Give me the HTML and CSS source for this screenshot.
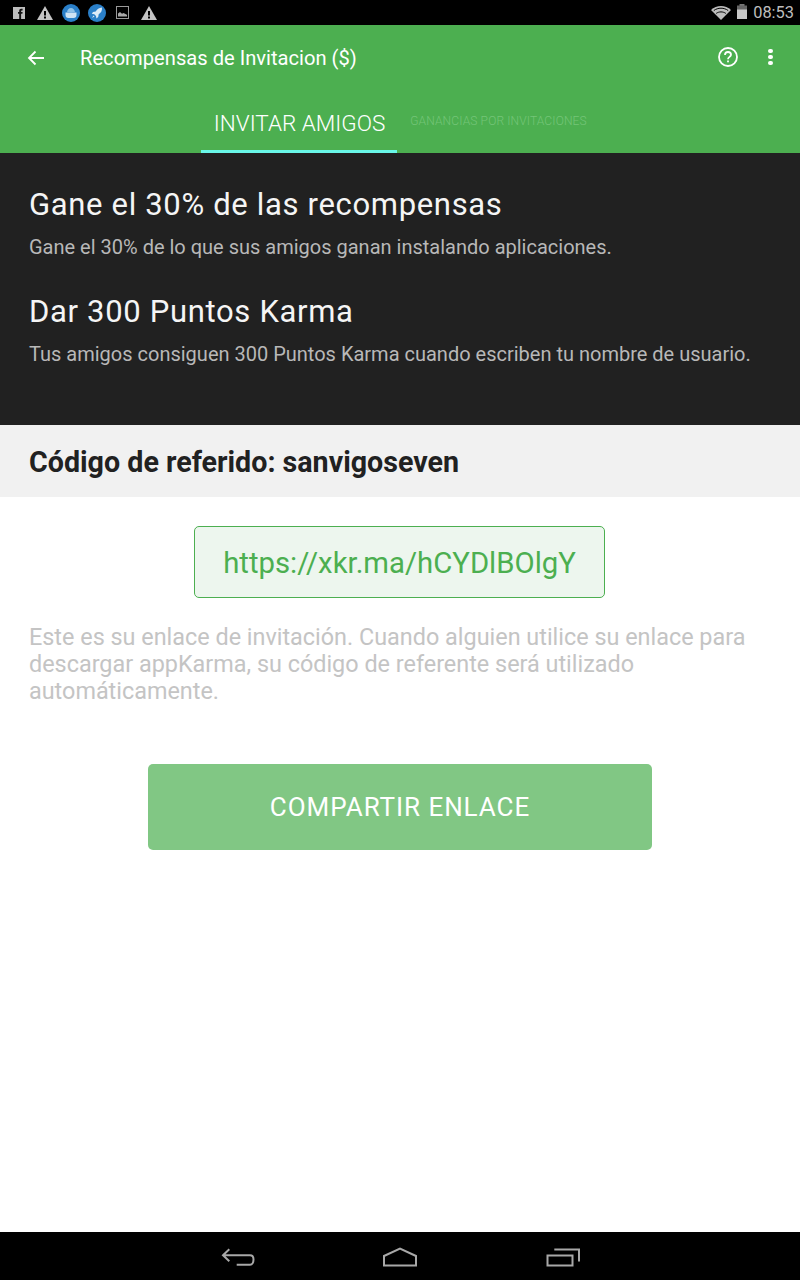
FILE: index.html
```html
<!DOCTYPE html>
<html lang="es">
<head>
<meta charset="utf-8">
<title>Recompensas de Invitacion</title>
<link rel="stylesheet" href="styles.css">
</head>
<body>
<div class="screen">
  <div class="statusbar">
    <div class="status-left">
      <svg class="si" width="12" height="12" viewBox="0 0 12 12"><rect width="12" height="12" fill="#bdbdbd"/><path d="M6.200 12V6.800H5V5h1.200V3.800C6.200 2.400 7 1.700 8.200 1.700h1.400v1.800H8.800c-.5 0-.7.200-.7.700V5h1.500l-.2 1.800H8.100V12z" fill="#111"/></svg>
      <svg class="si w1" width="16" height="14" viewBox="0 0 16 14"><path d="M8 0l8 14H0z" fill="#c4c4c4"/><rect x="7" y="5" width="2" height="4.500" fill="#000"/><rect x="7" y="10.500" width="2" height="2" fill="#000"/></svg>
      <svg class="si c1" width="18" height="18" viewBox="0 0 18 18"><circle cx="9" cy="9" r="9" fill="#2a7fc8"/><path d="M3.500 8.500h11V11a3 3 0 0 1-3 3h-5a3 3 0 0 1-3-3z" fill="#cfe4f4"/><path d="M5 8.500C5.200 5.500 7 4 9 4s3.800 1.500 4 4.500c-1.500-1-2.500 0-4 0s-2.500-1-4 0z" fill="#8fc2e8"/></svg>
      <svg class="si c2" width="18" height="18" viewBox="0 0 18 18"><circle cx="9" cy="9" r="9" fill="#2a7fc8"/><path d="M14 3.500c-3.200.2-5 1.800-6.300 4L5 8 3.800 9.800l2.500.4 1.700 1.700.4 2.500L10.200 13l.5-2.700c2.200-1.400 3.600-3.400 3.300-6.800z" fill="#dcebf7"/><path d="M5.500 11.500L4 14l2.500-1.500z" fill="#dcebf7"/></svg>
      <svg class="si p1" width="13" height="13" viewBox="0 0 13 13"><rect x=".5" y=".5" width="12" height="12" fill="none" stroke="#9a9a9a"/><path d="M2 10.500V7.500l2-1.500 2 1.800 1.500-.8 3.500 1.800v1.700z" fill="#a8a8a8"/></svg>
      <svg class="si w2" width="16" height="14" viewBox="0 0 16 14"><path d="M8 0l8 14H0z" fill="#c4c4c4"/><rect x="7" y="5" width="2" height="4.500" fill="#000"/><rect x="7" y="10.500" width="2" height="2" fill="#000"/></svg>
    </div>
    <div class="status-right">
      <svg width="20" height="14" viewBox="0 0 20 14"><path d="M10 14L0 4C5.500-1.200 14.500-1.200 20 4z" fill="#bdbdbd"/><path d="M2.800 4.600c4-3.200 10.400-3.200 14.400 0M5.200 7.400c2.800-2 6.800-2 9.600 0" fill="none" stroke="#000" stroke-width="1"/></svg>
      <svg class="battery" width="10" height="15" viewBox="0 0 10 15"><rect x="2.500" y="0" width="5" height="2" fill="#777"/><rect y="1.500" width="10" height="4.500" fill="#666"/><rect y="5.500" width="10" height="9.500" fill="#c8c8c8"/></svg>
      <span class="clock">08:53</span>
    </div>
  </div>

  <header class="appbar">
    <div class="toolbar">
      <svg class="back" width="18" height="16" viewBox="0 0 18 16"><path d="M17 8H2M8.500 1.500L2 8l6.500 6.500" fill="none" stroke="#fff" stroke-width="1.800"/></svg>
      <div class="title">Recompensas de Invitacion ($)</div>
      <svg class="help" width="20" height="20" viewBox="0 0 20 20"><circle cx="10" cy="10" r="9" fill="none" stroke="#fff" stroke-width="1.800"/><path d="M7 8c0-1.800 1.300-3 3-3s3 1.200 3 2.800c0 2-3 2.200-3 4.400" fill="none" stroke="#fff" stroke-width="1.800"/><rect x="9.100" y="13.500" width="1.800" height="1.800" fill="#fff"/></svg>
      <div class="dots"><i></i><i></i><i></i></div>
    </div>
    <div class="tabs">
      <div class="tab tab-active">INVITAR AMIGOS</div>
      <div class="tab tab-muted">GANANCIAS POR INVITACIONES</div>
    </div>
  </header>

  <section class="promo">
    <h2 class="promo-title">Gane el 30% de las recompensas</h2>
    <p class="promo-text">Gane el 30% de lo que sus amigos ganan instalando aplicaciones.</p>
    <h2 class="promo-title second">Dar 300 Puntos Karma</h2>
    <p class="promo-text">Tus amigos consiguen 300 Puntos Karma cuando escriben tu nombre de usuario.</p>
  </section>

  <div class="code-row">Código de referido: sanvigoseven</div>

  <main class="content">
    <div class="link-box">https://xkr.ma/hCYDlBOlgY</div>
    <p class="hint">Este es su enlace de invitación. Cuando alguien utilice su enlace para descargar appKarma, su código de referente será utilizado automáticamente.</p>
    <div class="share">COMPARTIR ENLACE</div>
  </main>

  <nav class="navbar">
    <svg width="34" height="20" viewBox="0 0 34 20"><path d="M8.300 2.300L2 8.300l6.300 6M2 8.300h27c2.500 0 3.500 2 3.500 4.200s-1 5.200-3.500 5.200H15.700" fill="none" stroke="#a8a8a8" stroke-width="2"/></svg>
    <svg width="36" height="20" viewBox="0 0 36 20"><path d="M2 9L18 1.500 34 9v9.500H2z" fill="none" stroke="#a8a8a8" stroke-width="2"/></svg>
    <svg width="35" height="20" viewBox="0 0 35 20"><rect x="2.500" y="8.500" width="25" height="10" fill="none" stroke="#a8a8a8" stroke-width="2"/><path d="M9.300 2.500H34v12" fill="none" stroke="#a8a8a8" stroke-width="2"/></svg>
  </nav>
</div>
</body>
</html>
```

FILE: styles.css
```css
* { box-sizing: border-box; }
html, body { margin: 0; padding: 0; }
body { font-family: Roboto, "Liberation Sans", sans-serif; background: #fff; }
.screen { width: 800px; height: 1280px; display: flex; flex-direction: column; overflow: hidden; }

.statusbar { height: 25px; background: #000; display: flex; justify-content: space-between; align-items: center; padding: 0 6px 0 13px; flex: none; }
.status-left { display: flex; align-items: center; }
.w1 { margin-left: 12px; }
.c1 { margin-left: 9px; }
.c2 { margin-left: 8px; }
.p1 { margin-left: 10px; }
.w2 { margin-left: 12px; }
.status-right { display: flex; align-items: center; gap: 6px; }
.battery { margin-bottom: 3px; }
.clock { color: #bdbdbd; font-size: 16.400px; }

.appbar { height: 128px; background: #4caf50; flex: none; display: flex; flex-direction: column; }
.toolbar { height: 66px; display: flex; align-items: center; padding: 0 27px 0 27px; }
.back { flex: none; margin-bottom: 1px; }
.title { color: #fff; font-size: 20.150px; margin-left: 35px; flex: 1; margin-bottom: 1px; }
.help { flex: none; margin-right: 30px; margin-bottom: 2px; }
.dots { display: flex; flex-direction: column; gap: 1.300px; width: 5px; margin-bottom: 2px; }
.dots i { display: block; width: 4.500px; height: 4.500px; border-radius: 50%; background: #fff; }

.tabs { flex: 1; display: flex; padding-left: 201px; }
.tab { display: flex; align-items: center; justify-content: center; }
.tab-active { width: 196px; color: #fff; font-size: 22.500px; font-weight: 300; border-bottom: 3px solid #69f7e8; padding: 4px 0 0 1px; }
.tab-muted { width: 191px; color: #74c578; font-size: 12px; font-weight: 300; letter-spacing: .14px; padding-left: 12px; padding-bottom: 2px; white-space: nowrap; }

.promo { height: 272px; background: #212121; padding: 34px 29px 0; flex: none; }
.promo-title { margin: 0; font-weight: 400; color: #f5f5f5; font-size: 31px; letter-spacing: .67px; line-height: 36px; }
.promo-title.second { margin-top: 35px; }
.promo-text { margin: 12px 0 0; color: #b8b8b8; font-size: 20px; line-height: 24px; }

.code-row { height: 72px; background: #f1f1f1; padding: 2px 29px 0; display: flex; align-items: center; font-size: 28.650px; font-weight: 700; color: #212121; flex: none; }

.content { flex: 1; display: flex; flex-direction: column; align-items: center; padding-top: 29px; }
.link-box { width: 411px; height: 72px; margin-right: 1px; border: 1px solid #4caf50; border-radius: 5px; background: #edf6ee; color: #4caf50; font-size: 29.300px; display: flex; align-items: center; justify-content: center; padding-top: 2px; }
.hint { align-self: stretch; margin: 26px 29px 0; color: #c4c4c4; font-size: 23.400px; line-height: 27px; }
.share { margin-top: 59px; width: 504px; height: 86px; background: #81c784; border-radius: 5px; color: #fff; font-size: 26px; letter-spacing: .94px; font-weight: 400; display: flex; align-items: center; justify-content: center; }

.navbar { height: 48px; background: #000; flex: none; display: flex; align-items: flex-start; gap: 127px; padding: 15px 0 0 221px; }
```
